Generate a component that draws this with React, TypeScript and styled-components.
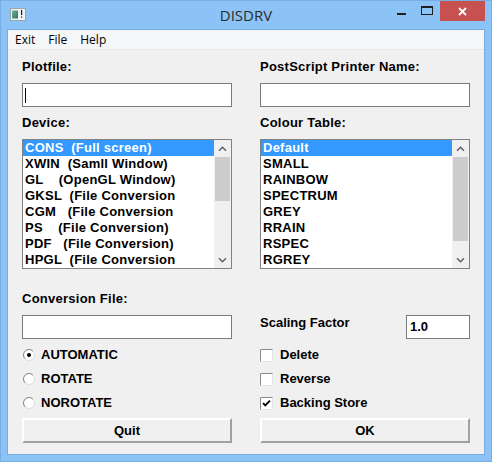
import React from "react";
import styled, { createGlobalStyle } from "styled-components";

const UI_FONT = `"Liberation Sans", Arial, sans-serif`;
const SYS_FONT = `"Open Sans", "Segoe UI", sans-serif`;

const GlobalStyle = createGlobalStyle`
  html, body { margin: 0; padding: 0; }
  body { width: 492px; height: 462px; overflow: hidden; background: #8BC3F6; }
  * { box-sizing: border-box; }
`;

const Window = styled.div`
  width: 492px;
  height: 462px;
  display: flex;
  flex-direction: column;
  background: #8bc3f6;
  border: 1px solid #79aee2;
`;

const TitleBar = styled.div`
  height: 28px;
  display: grid;
  grid-template-columns: 1fr auto 1fr;
  align-items: start;
`;

const IconSlot = styled.div`
  padding: 7px 0 0 9px;
  display: flex;
`;

const Title = styled.div`
  font-family: ${SYS_FONT};
  font-size: 15px;
  line-height: 28px;
  color: #2b2b2b;
`;

const Controls = styled.div`
  justify-self: end;
  display: flex;
  margin-right: 6px;
`;

const CaptionButton = styled.div<{ $close?: boolean }>`
  width: ${(p) => (p.$close ? 45 : 26)}px;
  height: 20px;
  display: flex;
  align-items: center;
  justify-content: center;
  background: ${(p) => (p.$close ? "#c75050" : "transparent")};
`;

const MinGlyph = styled.div`
  width: 9px;
  height: 2px;
  background: #1f1f1f;
  margin-top: 6px;
`;

const MaxGlyph = styled.div`
  width: 12px;
  height: 9px;
  border: 1px solid #1f1f1f;
  border-top-width: 2px;
  margin-top: -2px;
`;

const Client = styled.div`
  flex: 1;
  margin: 0 6px 6px;
  border: 1px solid #78ace0;
  background: #f0f0f0;
  display: flex;
  flex-direction: column;
`;

const MenuBar = styled.div`
  height: 20px;
  background: #f5f6f7;
  border-bottom: 1px solid #e3e5e8;
  display: flex;
  gap: 13px;
  padding: 1px 0 0 7px;
  font-family: ${SYS_FONT};
  font-size: 12px;
  line-height: 18px;
  color: #000;
`;

const MenuItem = styled.span``;

const Form = styled.div`
  display: grid;
  grid-template-columns: 210px 210px;
  column-gap: 28px;
  grid-template-rows: 24px 32px 24px 152px 24px 28px 24px 24px 24px 28px;
  padding: 9px 14px 0;
  font-family: ${UI_FONT};
  font-weight: bold;
  font-size: 13px;
  color: #000;
`;

const Label = styled.div<{ $spaced?: boolean }>`
  line-height: 16px;
  align-self: start;
  white-space: nowrap;
  letter-spacing: ${(p) => (p.$spaced ? "0.25px" : "0")};
`;

const TextBox = styled.div<{ $width?: number }>`
  width: ${(p) => (p.$width ? `${p.$width}px` : "100%")};
  height: 24px;
  align-self: start;
  background: #fff;
  border: 1px solid #7a7a7a;
  display: flex;
  align-items: center;
  padding: 0 3px;
  line-height: 16px;
`;

const Caret = styled.span`
  width: 1px;
  height: 15px;
  background: #000;
  margin-left: -1px;
`;

const ScalingRow = styled.div`
  display: flex;
  justify-content: space-between;
  align-items: start;
`;

const ListBox = styled.div`
  height: 130px;
  align-self: start;
  border: 1px solid #828282;
  background: #fff;
  display: flex;
`;

const Items = styled.div`
  flex: 1;
  overflow: hidden;
`;

const Item = styled.div<{ $selected?: boolean }>`
  height: 16px;
  line-height: 16px;
  padding-left: 2px;
  white-space: pre;
  letter-spacing: 0.25px;
  background: ${(p) => (p.$selected ? "#3399ff" : "transparent")};
  color: ${(p) => (p.$selected ? "#fff" : "#000")};
`;

const ScrollBar = styled.div`
  width: 17px;
  background: #f0f0f0;
  display: flex;
  flex-direction: column;
`;

const ScrollArrow = styled.div`
  height: 17px;
  display: flex;
  align-items: center;
  justify-content: center;
`;

const Thumb = styled.div<{ $h: number }>`
  height: ${(p) => p.$h}px;
  margin: 0 1px;
  background: #cdcdcd;
`;

const Track = styled.div`
  flex: 1;
`;

const OptionRow = styled.div<{ $gap: number; $indent: number }>`
  display: flex;
  align-items: center;
  gap: ${(p) => p.$gap}px;
  padding-left: ${(p) => p.$indent}px;
  line-height: 16px;
`;

const PushButton = styled.div`
  height: 25px;
  align-self: end;
  background: #f0f0f0;
  border-style: solid;
  border-width: 2px;
  border-color: #fff #a0a0a0 #a0a0a0 #fff;
  display: flex;
  align-items: center;
  justify-content: center;
  line-height: 16px;
`;

const AppIcon = () => (
  <svg width="16" height="13" viewBox="0 0 16 13">
    <defs>
      <linearGradient id="ig" x1="0" y1="0" x2="1" y2="1">
        <stop offset="0" stopColor="#6fb2a0" />
        <stop offset="1" stopColor="#2f6f66" />
      </linearGradient>
    </defs>
    <rect x="0.5" y="0.5" width="15" height="12" fill="#eef2f3" stroke="#9aa6ab" />
    <rect x="2" y="2.5" width="6" height="8" fill="url(#ig)" />
    <rect x="11" y="2" width="1.2" height="5" fill="#1a1a1a" />
    <rect x="11" y="8.5" width="1.2" height="1.2" fill="#1a1a1a" />
  </svg>
);

const CloseGlyph = () => (
  <svg width="9" height="9" viewBox="0 0 9 9">
    <path d="M1 1 L8 8 M8 1 L1 8" stroke="#fff" strokeWidth="1.8" />
  </svg>
);

const Chevron = ({ down }: { down?: boolean }) => (
  <svg width="9" height="6" viewBox="0 0 9 6">
    <path
      d={down ? "M1 1.2 L4.5 4.7 L8 1.2" : "M1 4.8 L4.5 1.3 L8 4.8"}
      stroke="#606060"
      strokeWidth="1.5"
      fill="none"
    />
  </svg>
);

const Radio = ({ checked }: { checked?: boolean }) => (
  <svg width="12" height="12" viewBox="0 0 12 12">
    <circle cx="6" cy="6" r="5.5" fill="#fff" stroke="#dcdcdc" />
    <path d="M2.1 9.9 A5.5 5.5 0 0 1 9.9 2.1" stroke="#8a8a8a" fill="none" />
    {checked && <circle cx="6" cy="6" r="2" fill="#000" />}
  </svg>
);

const Check = ({ checked }: { checked?: boolean }) => (
  <svg width="13" height="13" viewBox="0 0 13 13">
    <rect x="0" y="0" width="13" height="13" fill="#fff" />
    <path d="M12.5 0.5 V12.5 H0.5" stroke="#e3e3e3" fill="none" />
    <path d="M0.5 12.5 V0.5 H12.5" stroke="#8a8a8a" fill="none" />
    {checked && (
      <path d="M3 6 L5.2 8.4 L10 3.6" stroke="#000" strokeWidth="1.8" fill="none" />
    )}
  </svg>
);

type ListProps = { items: string[]; thumb: number };

const List = ({ items, thumb }: ListProps) => (
  <ListBox>
    <Items>
      {items.map((t, i) => (
        <Item key={t} $selected={i === 0}>
          {t}
        </Item>
      ))}
    </Items>
    <ScrollBar>
      <ScrollArrow>
        <Chevron />
      </ScrollArrow>
      <Thumb $h={thumb} />
      <Track />
      <ScrollArrow>
        <Chevron down />
      </ScrollArrow>
    </ScrollBar>
  </ListBox>
);

const devices = [
  "CONS  (Full screen)",
  "XWIN  (Samll Window)",
  "GL    (OpenGL Window)",
  "GKSL  (File Conversion",
  "CGM   (File Conversion",
  "PS    (File Conversion)",
  "PDF   (File Conversion)",
  "HPGL  (File Conversion",
];

const colours = ["Default", "SMALL", "RAINBOW", "SPECTRUM", "GREY", "RRAIN", "RSPEC", "RGREY"];

export default function App() {
  return (
    <>
      <GlobalStyle />
      <Window>
        <TitleBar>
          <IconSlot>
            <AppIcon />
          </IconSlot>
          <Title>DISDRV</Title>
          <Controls>
            <CaptionButton>
              <MinGlyph />
            </CaptionButton>
            <CaptionButton>
              <MaxGlyph />
            </CaptionButton>
            <CaptionButton $close>
              <CloseGlyph />
            </CaptionButton>
          </Controls>
        </TitleBar>
        <Client>
          <MenuBar>
            <MenuItem>Exit</MenuItem>
            <MenuItem>File</MenuItem>
            <MenuItem>Help</MenuItem>
          </MenuBar>
          <Form>
            <Label $spaced>Plotfile:</Label>
            <Label $spaced>PostScript Printer Name:</Label>

            <TextBox>
              <Caret />
            </TextBox>
            <TextBox />

            <Label $spaced>Device:</Label>
            <Label $spaced>Colour Table:</Label>

            <List items={devices} thumb={44} />
            <List items={colours} thumb={84} />

            <Label $spaced>Conversion File:</Label>
            <div />

            <TextBox />
            <ScalingRow>
              <Label>Scaling Factor</Label>
              <TextBox $width={64}>1.0</TextBox>
            </ScalingRow>

            <OptionRow $gap={6} $indent={1}>
              <Radio checked />
              AUTOMATIC
            </OptionRow>
            <OptionRow $gap={7} $indent={0}>
              <Check />
              Delete
            </OptionRow>

            <OptionRow $gap={6} $indent={1}>
              <Radio />
              ROTATE
            </OptionRow>
            <OptionRow $gap={7} $indent={0}>
              <Check />
              Reverse
            </OptionRow>

            <OptionRow $gap={6} $indent={1}>
              <Radio />
              NOROTATE
            </OptionRow>
            <OptionRow $gap={7} $indent={0}>
              <Check checked />
              Backing Store
            </OptionRow>

            <PushButton>Quit</PushButton>
            <PushButton>OK</PushButton>
          </Form>
        </Client>
      </Window>
    </>
  );
}
